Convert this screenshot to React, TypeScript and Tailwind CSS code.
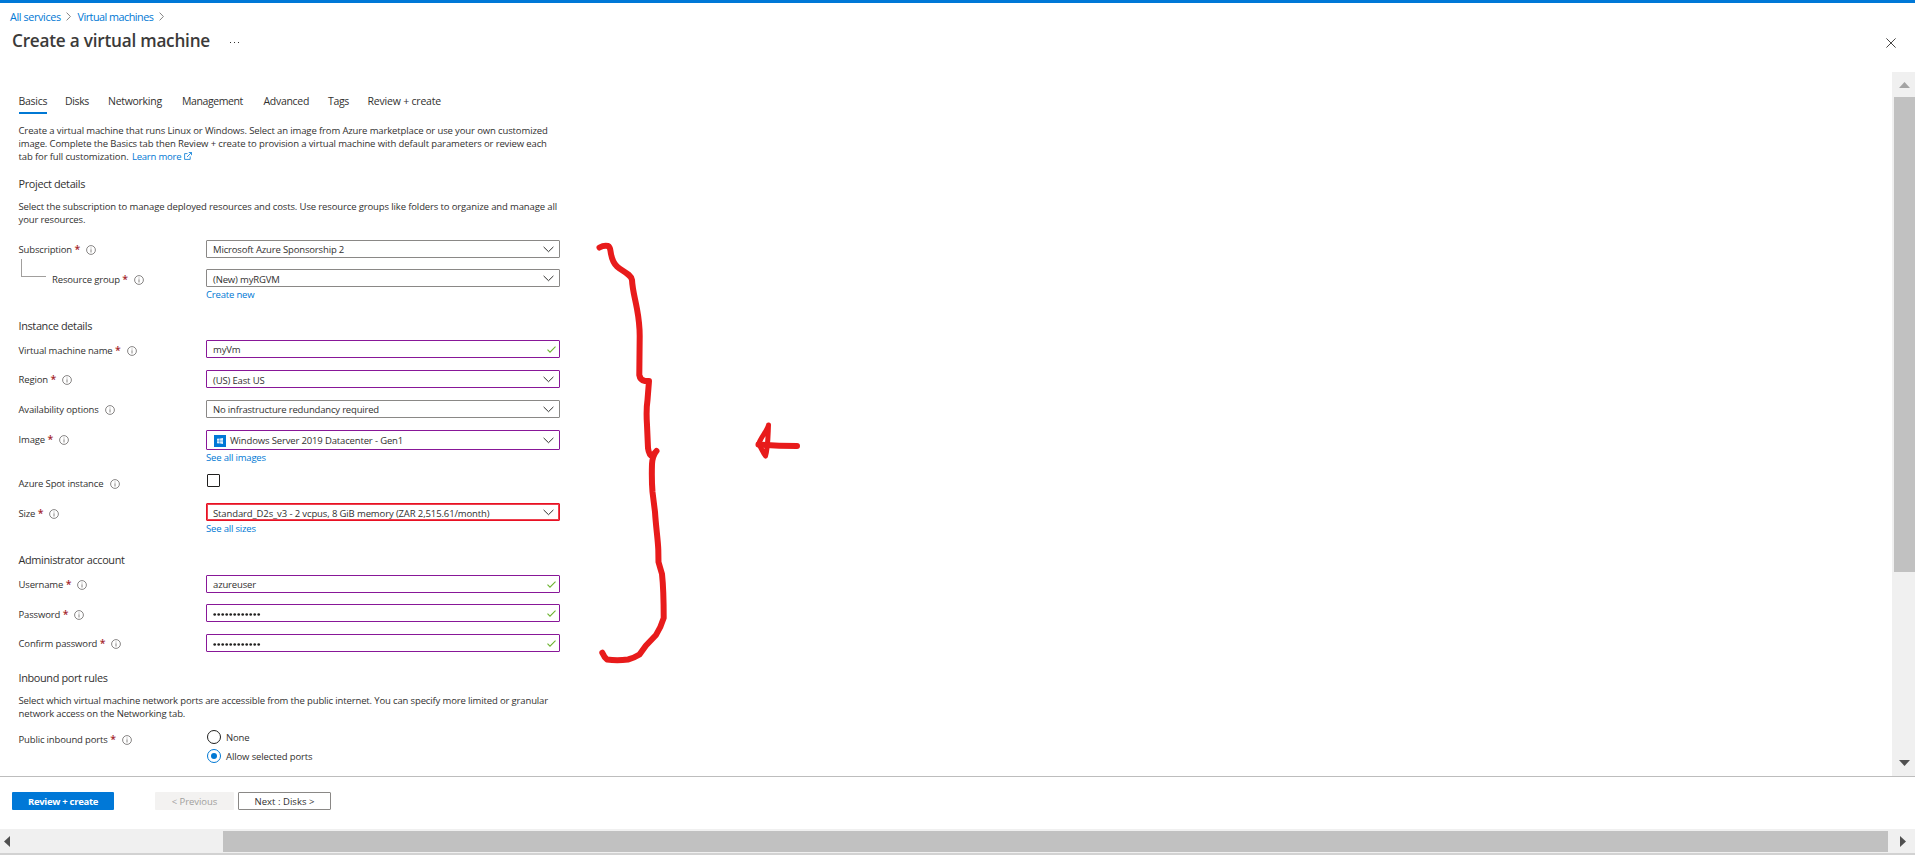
import type { ReactNode } from "react";

function Chevron({ className = "" }: { className?: string }) {
  return (
    <svg viewBox="0 0 5 9" className={`h-[9px] w-[5px] shrink-0 ${className}`} fill="none" stroke="#767676" strokeWidth="0.9">
      <path d="M0.6 0.6 4.4 4.5 0.6 8.4" />
    </svg>
  );
}

function ChevronDown() {
  return (
    <svg viewBox="0 0 11 7" className="h-[7px] w-[11px] shrink-0" fill="none" stroke="#323130" strokeWidth="1">
      <path d="M0.6 0.9 5.5 5.7 10.4 0.9" />
    </svg>
  );
}

function Check() {
  return (
    <svg viewBox="0 0 9 7" className="-mr-[2px] h-[7px] w-[9px] shrink-0" fill="none" stroke="#6bb32f" strokeWidth="1.1">
      <path d="M0.5 3.7 3 6.2 8.5 0.7" />
    </svg>
  );
}

function Info() {
  return (
    <svg viewBox="0 0 10 10" className="h-[10px] w-[10px] shrink-0" fill="none" stroke="#605e5c" strokeWidth="0.75">
      <circle cx="5" cy="5" r="4.4" />
      <path d="M5 4.3V7.5M5 2.6V3.4" />
    </svg>
  );
}

function WindowsTile() {
  return (
    <svg viewBox="0 0 12 12" className="mr-[4px] h-[12px] w-[12px] shrink-0">
      <rect width="12" height="12" fill="#0078d7" />
      <path d="M3 3.8 5.6 3.5V5.7H3ZM6.1 3.4 9 3V5.7H6.1ZM3 6.2H5.6V8.5L3 8.2ZM6.1 6.2H9V9L6.1 8.6Z" fill="#e2f0fb" />
    </svg>
  );
}

function FieldRow({
  label,
  required,
  indent,
  height,
  labelPad = "pt-0",
  children,
}: {
  label: string;
  required?: boolean;
  indent?: boolean;
  height: string;
  labelPad?: string;
  children: ReactNode;
}) {
  return (
    <div className={`flex shrink-0 items-start ${height}`}>
      <div className={`flex w-[187.5px] shrink-0 ${labelPad}`}>
        {indent && <div className="-mt-[11px] mr-[6px] ml-[2.5px] h-[18px] w-[25px] shrink-0 border-b border-l border-[#a19f9d]" />}
        <div className="flex h-[18px] items-center whitespace-nowrap">
          <span>{label}</span>
          {required && <span className="ml-[2.5px] w-[5px] text-[10.5px] leading-[14px] font-semibold text-[#a4262c]">*</span>}
          <span className="ml-[6.5px] pt-[2px]">
            <Info />
          </span>
        </div>
      </div>
      <div className="flex w-[354px] flex-col">{children}</div>
    </div>
  );
}

const tones = {
  gray: "h-[18px] border border-[#8a8886]",
  purple: "h-[18px] border border-[#881798]",
  tall: "h-[20px] border border-[#881798]",
  red: "h-[18px] border border-[#e81123] outline-1 -outline-offset-2 outline-[#e81123]/80",
};

function Box({ tone, check, low, children }: { tone: keyof typeof tones; check?: boolean; low?: boolean; children: ReactNode }) {
  return (
    <div className={`flex shrink-0 items-center justify-between rounded-[1px] pr-[5.5px] pl-[6px] ${tones[tone]}`}>
      <span className={`flex items-center whitespace-nowrap ${low ? "pt-[2px]" : "pt-px"}`}>{children}</span>
      {check ? <Check /> : <ChevronDown />}
    </div>
  );
}

function Link({ children, className = "" }: { children: ReactNode; className?: string }) {
  return <a className={`leading-[14px] tracking-[-0.18px] whitespace-nowrap text-[#0078d4] ${className}`}>{children}</a>;
}

function Heading({ children, className }: { children: ReactNode; className: string }) {
  return <h2 className={`shrink-0 text-[10.9px] leading-[14px] tracking-[-0.35px] ${className}`}>{children}</h2>;
}

const tabs = [
  { name: "Basics", cell: "w-[46.5px]", text: "tracking-[-0.25px]" },
  { name: "Disks", cell: "w-[43px]", text: "tracking-[-0.36px]" },
  { name: "Networking", cell: "w-[74px]", text: "tracking-[-0.28px]" },
  { name: "Management", cell: "w-[81.5px]", text: "tracking-[-0.4px]" },
  { name: "Advanced", cell: "w-[64.5px]", text: "tracking-[-0.3px]" },
  { name: "Tags", cell: "w-[39.5px]", text: "tracking-[-0.33px]" },
  { name: "Review + create", cell: "w-[90px]", text: "tracking-[-0.2px]" },
];

const dots = Array.from({ length: 12 }, (_, i) => i);

function Password() {
  return (
    <svg viewBox="0 0 48 5" className="mt-[2px] h-[5px] w-[48px]" fill="#201f1e">
      {dots.map((i) => (
        <circle key={i} cx={1.7 + i * 4} cy="2.5" r="1.35" />
      ))}
    </svg>
  );
}

function Annotation() {
  return (
    <svg
      viewBox="0 0 1915 855"
      className="pointer-events-none absolute top-0 left-0 h-[855px] w-[1915px]"
      fill="none"
      stroke="#e81b1b"
      strokeWidth="6"
      strokeLinecap="round"
      strokeLinejoin="round"
    >
      <path d="M599.5 247.5Q604 245 608 246Q610 247 610.5 251Q612 262 617 266.5C622 271 631 274 632 280C632.5 290 635 298 637 309C639 320 639.7 325 639.7 336L639.3 375Q640 380 645 381L649 381L647.5 400Q646 410 647 425L648 448Q649 455 652 456L656.5 451Q652.5 456 652 464Q651.5 480 652.5 492L655 512C656 528 658 540 658.3 550L658.5 562Q660.5 569 662 574Q663.7 590 663.7 618Q661 627 656 635L646 645.5L639.5 654.5Q634 658 628 659.5Q617 661 607 659.5Q604.5 657.5 602.3 652.7" />
      <path d="M768.5 425C767 431 761 437 758.5 444C761.5 448 763 453 765.5 456C768 448 768 436 768.5 425" strokeWidth="5" />
      <path d="M758.5 444.5Q777 446 797 446" />
    </svg>
  );
}

export default function App() {
  return (
    <div className="relative flex h-[855px] w-[1915px] flex-col overflow-hidden bg-white font-['Open_Sans','Noto_Sans',sans-serif] text-[9.5px] leading-[13px] tracking-[-0.15px] text-[#323130]">
      <div className="h-[3px] shrink-0 bg-[#0078d7]" />

      <header className="flex h-[69px] shrink-0 justify-between">
        <div>
          <nav className="flex h-[27px] items-center pl-[10px] text-[10.8px] text-[#0078d4]">
            <a className="w-[56px] tracking-[-0.38px] whitespace-nowrap">All services</a>
            <Chevron />
            <a className="ml-[6.5px] w-[81px] tracking-[-0.5px] whitespace-nowrap">Virtual machines</a>
            <Chevron />
          </nav>
          <div className="flex h-[22px] items-center pl-[12px]">
            <h1 className="w-[218px] text-[17.2px] leading-[20px] font-semibold tracking-[-0.23px] whitespace-nowrap text-[#3b3a39]">Create a virtual machine</h1>
            <svg viewBox="0 0 9 2" className="mt-[4px] h-[2px] w-[9px]" fill="#323130">
              <rect x="0" y="0" width="1" height="1" />
              <rect x="4" y="0" width="1" height="1" />
              <rect x="8" y="0" width="1" height="1" />
            </svg>
          </div>
        </div>
        <svg viewBox="0 0 10 10" className="mt-[35px] mr-[19px] h-[10px] w-[10px]" stroke="#323130" strokeWidth="0.9">
          <path d="M0.4 0.4 9.6 9.6M9.6 0.4 0.4 9.6" />
        </svg>
      </header>

      <div className="flex h-[704px] shrink-0 justify-between">
        <main className="flex w-[700px] flex-col overflow-hidden pl-[18.5px]">
          <div className="mt-[21px] flex h-[21px] shrink-0 text-[10.5px]">
            {tabs.map((tab, i) => (
              <div key={tab.name} className={`shrink-0 whitespace-nowrap ${tab.cell} ${tab.text}`}>
                <span className={i === 0 ? "inline-block h-[21px] border-b-2 border-[#0078d4] leading-[16px]" : "inline-block leading-[16px]"}>{tab.name}</span>
              </div>
            ))}
          </div>

          <p className="mt-[10px] shrink-0 tracking-[-0.12px] whitespace-nowrap">
            Create a virtual machine that runs Linux or Windows. Select an image from Azure marketplace or use your own customized
            <br />
            image. Complete the Basics tab then Review + create to provision a virtual machine with default parameters or review each
            <br />
            tab for full customization.{" "}
            <a className="ml-px tracking-[-0.2px] text-[#0078d4]">
              Learn more
              <svg viewBox="0 0 8 8" className="ml-[3px] inline-block h-[8px] w-[8px] align-[0px]" fill="none" stroke="#0078d4" strokeWidth="0.8">
                <path d="M3.5 1.6H0.6V7.4H6.2V4.4M3 5 7.4 0.6M4.8 0.5H7.5V3.2" />
              </svg>
            </a>
          </p>

          <Heading className="mt-[14px]">Project details</Heading>
          <p className="mt-[9px] mb-[14px] shrink-0 tracking-[-0.125px] whitespace-nowrap">
            Select the subscription to manage deployed resources and costs. Use resource groups like folders to organize and manage all
            <br />
            your resources.
          </p>

          <FieldRow label="Subscription" required height="h-[29px]">
            <Box tone="gray">Microsoft Azure Sponsorship 2</Box>
          </FieldRow>
          <FieldRow label="Resource group" required indent height="h-[50px]" labelPad="pt-px">
            <Box tone="gray" low>(New) myRGVM</Box>
            <Link className="mt-px">Create new</Link>
          </FieldRow>

          <Heading className="mb-[7px]">Instance details</Heading>
          <FieldRow label="Virtual machine name" required height="h-[30px]" labelPad="pt-px">
            <Box tone="purple" check>myVm</Box>
          </FieldRow>
          <FieldRow label="Region" required height="h-[30px]">
            <Box tone="purple" low>(US) East US</Box>
          </FieldRow>
          <FieldRow label="Availability options" height="h-[30px]">
            <Box tone="gray">
              <span className="tracking-[-0.18px]">No infrastructure redundancy required</span>
            </Box>
          </FieldRow>
          <FieldRow label="Image" required height="h-[44px]">
            <Box tone="tall">
              <span className="w-px" />
              <WindowsTile />
              Windows Server 2019 Datacenter - Gen1
            </Box>
            <Link className="mt-px">See all images</Link>
          </FieldRow>
          <FieldRow label="Azure Spot instance" height="h-[29px]">
            <span className="ml-px h-[13px] w-[13px] rounded-[1px] border border-[#201f1e]" />
          </FieldRow>
          <FieldRow label="Size" required height="h-[50px]" labelPad="pt-px">
            <Box tone="red" low>
              <span className="tracking-[-0.12px]">Standard_D2s_v3 - 2 vcpus, 8 GiB memory (ZAR 2,515.61/month)</span>
            </Box>
            <Link className="mt-px">See all sizes</Link>
          </FieldRow>

          <Heading className="mb-[8px]">Administrator account</Heading>
          <FieldRow label="Username" required height="h-[29px]">
            <Box tone="purple" check>azureuser</Box>
          </FieldRow>
          <FieldRow label="Password" required height="h-[30px]" labelPad="pt-px">
            <Box tone="purple" check>
              <Password />
            </Box>
          </FieldRow>
          <FieldRow label="Confirm password" required height="h-[37px]">
            <Box tone="purple" check>
              <Password />
            </Box>
          </FieldRow>

          <Heading className="">Inbound port rules</Heading>
          <p className="mt-[9px] mb-[10px] shrink-0 tracking-[-0.14px] whitespace-nowrap">
            Select which virtual machine network ports are accessible from the public internet. You can specify more limited or granular
            <br />
            network access on the Networking tab.
          </p>
          <FieldRow label="Public inbound ports" required height="h-[40px]">
            <label className="flex h-[14px] items-center">
              <span className="ml-px h-[14px] w-[14px] rounded-full border border-[#201f1e]" />
              <span className="ml-[5px] pt-px">None</span>
            </label>
            <label className="mt-[5px] flex h-[14px] items-center">
              <span className="ml-px flex h-[14px] w-[14px] items-center justify-center rounded-full border border-[#0078d4]">
                <span className="h-[6px] w-[6px] rounded-full bg-[#0078d4]" />
              </span>
              <span className="ml-[5px] pt-px tracking-[-0.12px]">Allow selected ports</span>
            </label>
          </FieldRow>
        </main>

        <div className="flex w-[23px] shrink-0 flex-col items-end bg-[#f0f0f0]">
          <svg viewBox="0 0 11 6" className="mt-[10px] mr-[5px] h-[6px] w-[11px] shrink-0" fill="#a3a3a3">
            <path d="M0 6 5.5 0 11 6Z" />
          </svg>
          <div className="mt-[9px] h-[475px] w-[21px] shrink-0 bg-[#c1c1c1]" />
          <svg viewBox="0 0 11 6" className="mt-auto mr-[5px] mb-[10px] h-[6px] w-[11px] shrink-0" fill="#505050">
            <path d="M0 0H11L5.5 6Z" />
          </svg>
        </div>
      </div>

      <footer className="flex h-[53px] shrink-0 items-start border-t border-[#bdbdbd] pt-[15px] pl-[12px]">
        <button className="h-[18px] w-[102px] rounded-[1px] bg-[#0078d7] pt-px text-[9.5px] leading-[16px] font-bold tracking-[-0.3px] text-white">Review + create</button>
        <button className="ml-[41px] h-[18px] w-[79px] rounded-[1px] bg-[#f3f2f1] pt-px text-[9.5px] leading-[16px] tracking-[-0.05px] text-[#a19f9d]">&lt; Previous</button>
        <button className="ml-[4px] h-[18px] w-[93px] rounded-[1px] border border-[#8a8886] pt-px text-[9.5px] leading-[15px] tracking-[0.03px]">Next : Disks &gt;</button>
      </footer>

      <div className="flex h-[24px] shrink-0 items-center bg-[#f0f0f0]">
        <svg viewBox="0 0 6 11" className="ml-[4px] h-[11px] w-[6px]" fill="#505050">
          <path d="M6 0V11L0 5.5Z" />
        </svg>
        <div className="ml-[213px] h-[21px] w-[1665px] bg-[#c1c1c1]" />
        <svg viewBox="0 0 6 11" className="ml-[12px] h-[11px] w-[6px]" fill="#505050">
          <path d="M0 0V11L6 5.5Z" />
        </svg>
      </div>
      <div className="h-[2px] shrink-0 bg-[#d2d2d2]" />

      <Annotation />
    </div>
  );
}
